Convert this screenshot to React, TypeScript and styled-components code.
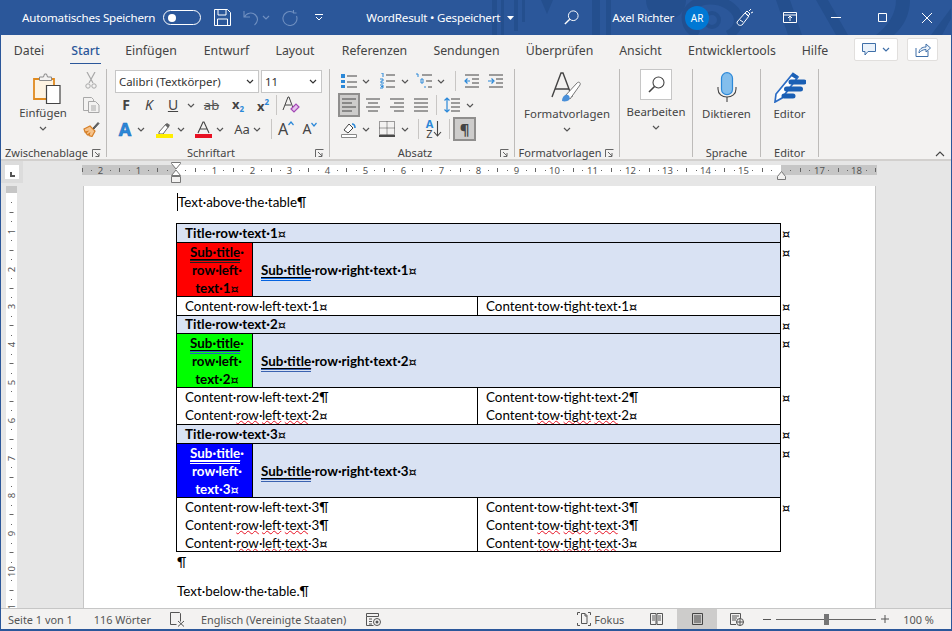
import React from "react";
import styled, { createGlobalStyle } from "styled-components";

const UI = `"Noto Sans", "Open Sans", sans-serif`;
const DOC = `Lato, "Noto Sans", sans-serif`;

const Global = createGlobalStyle`
  html, body { margin: 0; padding: 0; overflow: hidden; }
  body { font-family: ${UI}; }
`;

const Win = styled.div`
  width: 952px; height: 631px; box-sizing: border-box; display: flex; flex-direction: column;
  border-left: 1px solid #2b579a; border-right: 1px solid #2b579a; border-bottom: 2px solid #2b579a;
  background: #e6e6e6; overflow: hidden;
`;
const TitleBar = styled.div`
  position: relative; height: 35px; margin: 0 -1px; background: #2b579a; color: #fff; display: flex; align-items: center;
  flex: none; font-size: 11.6px; letter-spacing: -0.2px; overflow: hidden; white-space: nowrap;
`;
const Pattern = styled.svg`position: absolute; left: 476px; top: 0;`;
const TitleSlot = styled.div<{ $l: number }>`
  position: relative; margin-left: ${p => p.$l}px; display: flex; align-items: center; flex: none;
`;
const Toggle = styled.div`
  width: 38px; height: 15px; box-sizing: border-box; border: 1px solid #fff; border-radius: 8px; display: flex; align-items: center; padding-left: 4px;
`;
const Knob = styled.div`width: 8px; height: 8px; border-radius: 50%; background: #fff;`;
const Avatar = styled.div`
  width: 24px; height: 24px; border-radius: 50%; background: #0078d4; font-size: 10px; letter-spacing: 0; display: flex; align-items: center; justify-content: center;
`;

const Tabs = styled.div`
  height: 29px; flex: none; display: flex; align-items: flex-start; background: #f3f2f1; color: #444; font-size: 12.3px; white-space: nowrap;
`;
const Tab = styled.div<{ $w: number }>`
  width: ${p => p.$w}px; flex: none; display: flex; justify-content: center; padding-top: 7px;
`;
const TabLabel = styled.span<{ $active?: boolean }>`
  height: 21px; line-height: 17px; box-sizing: content-box; display: block;
  ${p => (p.$active ? `border-bottom: 2px solid #2b579a; color: #2b579a; font-weight: 500; padding: 0 1px;` : "")}
`;
const TabActions = styled.div`display: flex; gap: 9px; margin-left: 17px; padding-top: 3px;`;
const TabAction = styled.div<{ $w: number }>`
  width: ${p => p.$w}px; height: 23px; box-sizing: border-box; background: #fff; border: 1px solid #e1dfdd; border-radius: 2px;
  display: flex; align-items: center; justify-content: center; gap: 6px;
`;

const Ribbon = styled.div`
  height: 97px; flex: none; box-sizing: border-box; background: #f3f2f1; display: flex; padding-top: 5px; position: relative; color: #444; font-size: 11.4px; white-space: nowrap;
  border-bottom: 2px solid #d2d0ce;
`;
const Group = styled.div<{ $w: number }>`
  width: ${p => p.$w}px; flex: none; box-sizing: border-box; height: 88px; border-right: 1px solid #bdbbb9; display: flex; flex-direction: column;
`;
const GroupBody = styled.div<{ $col?: boolean }>`
  flex: 1; min-height: 0; display: flex; ${p => (p.$col ? "flex-direction: column; align-items: center;" : "")}
`;
const GroupFoot = styled.div`
  height: 15px; line-height: 14px; display: grid; grid-template-columns: 1fr 14px; text-align: center; font-size: 11px; color: #444; margin-bottom: -4px; flex: none;
`;
const GroupFootFull = styled(GroupFoot)`grid-template-columns: 1fr;`;
const Launcher = styled.div`display: flex; align-items: center;`;
const Stack = styled.div<{ $pl?: number }>`display: flex; flex-direction: column; padding-left: ${p => p.$pl ?? 0}px;`;
const Row = styled.div<{ $h: number }>`height: ${p => p.$h}px; display: flex; align-items: center;`;
const Tool = styled.div<{ $w: number; $ml?: number; $on?: boolean }>`
  width: ${p => p.$w}px; margin-left: ${p => p.$ml ?? 0}px; flex: none; height: 100%; display: flex; align-items: center; justify-content: center; box-sizing: border-box;
  ${p => (p.$on ? "background: #cdcccb; border: 2px solid #8f8e8d;" : "")}
`;
const Sep = styled.div<{ $ml: number }>`width: 1px; height: 20px; margin-left: ${p => p.$ml}px; background: #c8c6c4; flex: none;`;
const Combo = styled.div<{ $w: number; $ml?: number }>`
  width: ${p => p.$w}px; margin-left: ${p => p.$ml ?? 0}px; height: 23px; box-sizing: border-box; border: 1px solid #c6c6c6; background: #fff; display: flex; align-items: center; justify-content: space-between;
  padding: 0 4px 0 3px; font-size: 11.4px; color: #333;
`;
const Glyph = styled.span<{ $b?: boolean; $i?: boolean; $s?: number }>`
  font-size: ${p => p.$s ?? 13}px; font-weight: ${p => (p.$b ? 700 : 400)}; font-style: ${p => (p.$i ? "italic" : "normal")}; color: #444; line-height: 1; position: relative;
`;
const Sub = styled.span<{ $up?: boolean }>`font-size: 8px; color: #2b88d8; font-weight: 700; vertical-align: ${p => (p.$up ? "6px" : "-3px")};`;
const Strike = styled.span`text-decoration: line-through; font-size: 13px; color: #555;`;
const PasteCol = styled.div`width: 66px; margin-left: 9px; display: flex; flex-direction: column; align-items: center; padding-top: 3px; box-sizing: border-box;`;
const PasteArt = styled.div`margin-left: 7px;`;
const PasteLabel = styled.div`line-height: 17px; font-size: 11.4px; margin-bottom: 5px;`;
const MiniCol = styled.div`width: 30px; display: flex; flex-direction: column; align-items: center; gap: 8px; padding-top: 3px;`;
const BigIcon = styled.div<{ $h: number; $pt: number }>`height: ${p => p.$h}px; padding-top: ${p => p.$pt}px; display: flex; justify-content: center;`;
const BigLabel = styled.div<{ $mt?: number }>`line-height: 16px; margin-top: ${p => p.$mt ?? 0}px; font-size: 11.4px;`;
const BoxIcon = styled.div`width: 32px; height: 31px; box-sizing: border-box; background: #fff; border: 1px solid #c6c6c6; display: flex; align-items: center; justify-content: center;`;
const Collapse = styled.div`position: absolute; right: 6px; bottom: 2px;`;

const RulerRow = styled.div`
  height: 25px; flex: none; display: flex; align-items: flex-start; background: #e6e6e6; padding-top: 4px; box-sizing: border-box;
`;
const Corner = styled.div`
  width: 14px; height: 14px; margin-left: 4px; margin-right: 63px; background: #fff; outline: 4px solid #dcdcdc; flex: none; display: flex; align-items: flex-end; justify-content: center;
`;
const CornerMark = styled.div`width: 5px; height: 5px; border-left: 2px solid #555; border-bottom: 2px solid #555; margin-bottom: 2px; box-sizing: border-box;`;
const Main = styled.div`flex: 1; min-height: 0; display: flex; overflow: hidden;`;
const VRuler = styled.div`width: 82px; flex: none; padding-left: 5px; box-sizing: border-box; background: #e6e6e6;`;
const Page = styled.div`
  width: 793px; flex: none; box-sizing: border-box; background: #fff; border-left: 1px solid #c6c6c6; border-right: 1px solid #c6c6c6;
  padding: 7px 0 0 93px; font-family: ${DOC}; font-size: 13.4px; color: #000; line-height: 18px; overflow: hidden; white-space: nowrap;
`;
const Para = styled.div<{ $mb?: number }>`height: 18px; margin-bottom: ${p => p.$mb ?? 0}px;`;
const Caret = styled.span`display: inline-block; width: 1px; height: 18px; background: #000; vertical-align: top;`;
const Table = styled.table`
  border-collapse: collapse; table-layout: fixed; width: 625px; margin: 0 0 1px -1px; line-height: 18px;
`;
const Cell = styled.td<{ $bg?: string; $fg?: string; $center?: boolean; $b?: boolean; $lh?: number }>`
  border: 1px solid #000; padding: ${p => (p.$center ? "0 0 0 5px" : "0 8px")}; background: ${p => p.$bg ?? "#fff"}; color: ${p => p.$fg ?? "#000"};
  font-weight: ${p => (p.$b ? 700 : 400)}; text-align: ${p => (p.$center ? "center" : "left")}; vertical-align: middle; overflow: hidden;
  ${p => (p.$lh ? `line-height: ${p.$lh}px;` : "")}
`;
const Line = styled.div<{ $tight?: boolean }>`${p => (p.$tight ? "margin-bottom: -1px;" : "")}`;
const CurSign = styled.span`font-family: "DejaVu Sans", sans-serif; font-size: 13px; line-height: 1; font-weight: 400;`;
const Mark = styled.td`border: none; padding: 0 0 0 1px; vertical-align: top; line-height: 18px;`;
const Rw = styled.tr<{ $h: number }>`height: ${p => p.$h}px;`;
const Spell = styled.span`text-decoration: underline wavy #e81123 1px; text-underline-offset: 0; text-decoration-skip-ink: none;`;
const Gram = styled.span<{ $c: string; $u: string }>`
  text-decoration: underline ${p => p.$u} 1px; text-underline-offset: 2px; border-bottom: 3px double ${p => p.$c};
`;

const Status = styled.div`
  height: 20px; flex: none; box-sizing: content-box; border-top: 1px solid #c6c6c6; background: #f3f2f1; display: flex; align-items: center; font-size: 10.9px; color: #555; white-space: nowrap;
`;
const StatusItem = styled.div<{ $l: number; $w?: number; $on?: boolean }>`
  margin-left: ${p => p.$l}px; ${p => (p.$w ? `width: ${p.$w}px;` : "")} height: 100%; display: flex; align-items: center; justify-content: center; gap: 3px; flex: none;
  ${p => (p.$on ? "background: #cdcccb;" : "")}
`;
const SliderBox = styled(StatusItem)`gap: 0;`;
const SliderLine = styled.div<{ $w: number }>`width: ${p => p.$w}px; height: 1px; background: #666;`;
const SliderThumb = styled.div`width: 5px; height: 11px; background: #757575;`;

/* ---------- icons ---------- */
type IP = { w: number; h: number; children: React.ReactNode };
const I = ({ w, h, children }: IP) => (
  <svg width={w} height={h} viewBox={`0 0 ${w} ${h}`} fill="none" style={{ display: "block", flex: "none" }}>{children}</svg>
);
const Chev = ({ c = "#555" }: { c?: string }) => (
  <I w={8} h={5}><path d="M1 1l3 3 3-3" stroke={c} strokeWidth="1.2" /></I>
);
const ChevUp = () => <I w={10} h={6}><path d="M1 5l4-4 4 4" stroke="#444" strokeWidth="1.1" /></I>;
const LaunchIcon = () => (
  <I w={9} h={9}><path d="M.5 8V.5H8.5M3 3l4 4M7 4v3.5H3.5" stroke="#666" /></I>
);

const Paste = () => (
  <I w={28} h={32}>
    <path d="M1 7h20v20H1z" fill="#fdf3e2" stroke="#e08a1e" strokeWidth="1.8" />
    <path d="M6.500 8.500V5h4l1-3h2l1 3h4v3.500z" fill="#f3f2f1" stroke="#8a8a8a" />
    <path d="M13.500 13.500h13.500v18H13.500z" fill="#fff" stroke="#444" strokeWidth="1.2" />
  </I>
);
const Scissors = () => (
  <I w={12} h={17}>
    <path d="M2 0l6 11M10 0L4 11" stroke="#a8a8a8" strokeWidth="1.2" />
    <circle cx="3" cy="14" r="2.2" stroke="#a8a8a8" /><circle cx="9" cy="14" r="2.2" stroke="#a8a8a8" />
  </I>
);
const Copy = () => (
  <I w={17} h={16}>
    <path d="M.5.500h8l2 2v11H.5z" fill="#f3f2f1" stroke="#a8a8a8" />
    <path d="M5.500 4.500h7l3.500 3.500v7.500H5.500z" fill="#f3f2f1" stroke="#a8a8a8" />
    <path d="M8 9h5M8 11h5M8 13h5" stroke="#a8a8a8" />
  </I>
);
const Painter = () => (
  <I w={17} h={16}>
    <path d="M1 8l6-3 5 5-3 5.500-3-1 .5-2-2 1.500-1.500-2 1.500-1.500L2 11z" fill="#f6c38b" stroke="#d67f27" strokeWidth="1.2" />
    <path d="M10 7l5-5.500 1 1-5 5.500z" fill="#666" stroke="#444" strokeWidth=".8" />
  </I>
);
const ABlue = () => (
  <span><Glyph $b $s={18} style={{ color: "#2b88d8", WebkitTextStroke: "0.6px #1b6ec2" }}>A</Glyph></span>
);
const Eraser = () => (
  <I w={18} h={18}>
    <path d="M1 14L6 1h1l4 11M3 9h6" stroke="#444" />
    <path d="M9 13l5-5 3 3-5 5z" fill="#e7c3ee" stroke="#a349b5" strokeWidth="1.2" />
  </I>
);
const Hi = () => (
  <I w={17} h={17}>
    <path d="M3 11l7-8 3 2-6 8H3z" fill="#fff" stroke="#666" />
    <path d="M9 4l2-2 3 2-2 3z" fill="#666" />
    <rect y="13" width="17" height="4" fill="#ffee00" />
  </I>
);
const ARed = () => (
  <I w={17} h={17}>
    <path d="M3 12L8 1h1l5 11M5 8h7" stroke="#444" strokeWidth="1.1" />
    <rect y="13" width="17" height="4" fill="#e81123" />
  </I>
);
const Grow = ({ up }: { up: boolean }) => (
  <span style={{ display: "flex", alignItems: "flex-start" }}>
    <Glyph $s={up ? 16 : 14}>A</Glyph>
    <I w={6} h={5}><path d={up ? "M.5 4L3 1l2.500 3" : "M.5 1L3 4l2.500-3"} stroke="#2b88d8" strokeWidth="1.2" /></I>
  </span>
);
const Bullets = () => (
  <I w={16} h={15}>
    <path d="M0 0h4v4H0zM0 6h4v3H0zM0 11h4v3H0z" fill="#2b88d8" />
    <path d="M6 2h10M6 8h10M6 13h10" stroke="#444" />
  </I>
);
const Numbers = () => (
  <I w={15} h={16}>
    <path d="M1 0h2v4M0 6h3v2H1v2h3M0 12h3v3H0M1 13.500h2" stroke="#2b88d8" />
    <path d="M6 2h9M6 8h9M6 14h9" stroke="#444" />
  </I>
);
const Multi = () => (
  <I w={17} h={16}>
    <path d="M0 1h2v3M5 6h2v4h-2zM9 13v2" stroke="#2b88d8" />
    <path d="M6 2h10M10 8h6M12 14h4" stroke="#444" />
  </I>
);
const Indent = ({ right }: { right: boolean }) => (
  <I w={15} h={14}>
    <path d="M1 1h14M8 5h7M8 9h7M1 13h14" stroke="#444" />
    <path d={right ? "M0 7h5M3.500 4.500L6 7l-2.500 2.500" : "M6 7H1M3.500 4.500L1 7l2.500 2.500"} stroke="#2b88d8" strokeWidth="1.2" />
  </I>
);
const Align = ({ k }: { k: "l" | "c" | "r" | "j" }) => {
  const rows = { l: "M0 1h14M0 5h10M0 9h14M0 13h10", c: "M0 1h14M2 5h10M0 9h14M2 13h10", r: "M0 1h14M4 5h10M0 9h14M4 13h10", j: "M0 1h14M0 5h14M0 9h14M0 13h14" }[k];
  return <I w={14} h={14}><path d={rows} stroke="#444" /></I>;
};
const Spacing = () => (
  <I w={16} h={16}>
    <path d="M7 2h9M7 6h9M7 10h9M7 14h9" stroke="#444" />
    <path d="M3 1v14M.5 3.500L3 1l2.500 2.500M.5 12.500L3 15l2.500-2.500" stroke="#2b88d8" strokeWidth="1.2" />
  </I>
);
const Shade = () => (
  <I w={17} h={17}>
    <path d="M3 9l5-6 4 4-5 5z" fill="#fff" stroke="#444" />
    <path d="M11 3c2 0 3 2 3 4" stroke="#2b88d8" strokeWidth="1.6" />
    <path d="M.5 13.500h15v3H.5z" fill="#fff" stroke="#888" />
  </I>
);
const Borders = () => (
  <I w={16} h={16}>
    <path d="M.5.500h15v13H.5zM8 .5v13M.5 7h15" stroke="#444" strokeDasharray="1 1" />
    <path d="M0 15h16" stroke="#111" strokeWidth="1.5" />
  </I>
);
const Sort = () => (
  <span style={{ display: "flex", alignItems: "center" }}>
    <span style={{ display: "flex", flexDirection: "column", lineHeight: "10px", fontSize: 11, fontWeight: 700, alignItems: "center" }}>
      <span style={{ color: "#2b88d8" }}>A</span><span style={{ color: "#444", fontWeight: 400 }}>Z</span>
    </span>
    <I w={9} h={16}><path d="M4.500 0v15M1 11l3.500 4L8 11" stroke="#444" strokeWidth="1.1" /></I>
  </span>
);
const StyleIcon = () => (
  <I w={32} h={32}>
    <path d="M1 25L10 1h2l9 24M4.500 17h13" stroke="#444" strokeWidth="1.4" />
    <path d="M14 24l12-13c2-2 4 0 3 2L19 27z" fill="#fff" stroke="#777" />
    <path d="M11 29c0-4 3-7 6-6 2 1 2 3 1 5-1 1-4 2-7 1z" fill="#4a90d9" />
  </I>
);
const Lens = ({ s = 17, c = "#444" }: { s?: number; c?: string }) => (
  <svg width={s} height={s} viewBox="0 0 17 17" fill="none" style={{ display: "block" }}>
    <circle cx="10.500" cy="6.500" r="5.500" stroke={c} strokeWidth="1.1" />
    <path d="M6.500 10.500L1 16" stroke={c} strokeWidth="1.6" />
  </svg>
);
const Mic = () => (
  <I w={20} h={30}>
    <rect x="4.500" y=".7" width="11" height="22" rx="5.500" fill="#83beec" stroke="#2b88d8" strokeWidth="1.200" />
    <path d="M1 15v2c0 5 4 8 9 8s9-3 9-8v-2" stroke="#444" strokeWidth="1.1" />
    <path d="M10 25v5" stroke="#444" strokeWidth="1.1" />
  </I>
);
const Pen = () => (
  <I w={32} h={31}>
    <path d="M19 1.500L24 5 8 26l-7 4 1-8z" fill="#fff" stroke="#2b6cc4" strokeWidth="1.700" />
    <path d="M17 10h13M12.500 17h14M10 24h9" stroke="#1a5fb4" strokeWidth="5" strokeLinecap="round" />
    <path d="M19 1l5 3-2 3-5-3z" fill="#1a5fb4" />
  </I>
);
const Bubble = () => (
  <I w={14} h={13}><path d="M.5.500h13v8H6L3 12V8.500H.5z" fill="#eaf2fa" stroke="#3f6fa8" /></I>
);
const Share = () => (
  <I w={16} h={14}>
    <path d="M1 5v8.500h12V8" stroke="#3f6fa8" />
    <path d="M4 10c0-4 3-6 7-6V1l4.500 4-4.500 4V6.500C8 6.500 5.500 8 4 10z" fill="#eaf2fa" stroke="#3f6fa8" />
  </I>
);
const Save = () => (
  <I w={17} h={17}><path d="M.5.500h13l3 3v13H.5zM4 .5V6h8V.5M3.500 16.500V10h10v6.500" stroke="#fff" /></I>
);
const Undo = () => (
  <I w={16} h={16}><path d="M1 1v6h6M1.500 7C3 3 9 1.500 12.500 5c3 3 2.500 7-1 10" stroke="#6f8fc0" strokeWidth="1.1" /></I>
);
const Redo = () => (
  <I w={16} h={16}><path d="M11 2.200A7 7 0 1 0 14.500 6M11.500 0v3h3" stroke="#6f8fc0" strokeWidth="1.1" /></I>
);
const Qat = () => <I w={8} h={7}><path d="M0 .5h8M1 3l3 3 3-3" stroke="#fff" /></I>;
const Wand = () => (
  <I w={17} h={17}>
    <path d="M1 13l8-9 4 3-7 9c-2 1-5 0-5-3z" stroke="#fff" />
    <path d="M9 4l2-2 3 3-2 2zM13 2l2-2M15 4l2-1M4 11l3 2" stroke="#fff" />
  </I>
);
const Display = () => (
  <I w={14} h={11}><path d="M.5.500h13v10H.5zM.5 3h13M7 9V4.500M5 6l2-2 2 2" stroke="#fff" /></I>
);
const Min = () => <I w={10} h={1}><path d="M0 .5h10" stroke="#fff" /></I>;
const Max = () => <I w={9} h={9}><path d="M.5.500h8v8h-8z" stroke="#fff" /></I>;
const Close = () => <I w={10} h={10}><path d="M0 0l10 10M10 0L0 10" stroke="#fff" /></I>;
const Proof = () => (
  <I w={15} h={15}><path d="M.5.500h9l1 1v8M.5.500v12h6" stroke="#555" /><path d="M8 9l6 5.500M14 9l-6 5.500" stroke="#555" /></I>
);
const Macro = () => (
  <I w={15} h={13}>
    <path d="M.5.500h12v3H.5zM.5 3.500v9h7M3 6h3M3 8.500h3M3 11h3" stroke="#555" />
    <circle cx="11" cy="9" r="3.500" stroke="#555" /><circle cx="11" cy="9" r="1.500" fill="#555" />
  </I>
);
const Focus = () => (
  <I w={14} h={14}>
    <path d="M.5 3V.5H3M11 .5h2.500V3M.5 11v2.500H3M11 13.500h2.500V11" stroke="#555" />
    <path d="M4.500 1.500h3.500l2 2v8H4.500zM8 1.500V4h2" stroke="#555" />
  </I>
);
const Read = () => (
  <I w={13} h={12}><path d="M.5.500h5.500v11H.5zM7 .5h5.500v11H7zM2 3h3M2 5h3M2 7h3M8 3h3M8 5h3M8 7h3" stroke="#555" /></I>
);
const Layout = () => (
  <I w={11} h={12}><path d="M.5.500h10v11H.5zM2 3h7M2 5h7M2 7h7M2 9h7" stroke="#444" /></I>
);
const Web = () => (
  <I w={14} h={13}>
    <path d="M.5.500h10V6M.5.500v11H6M2 3h7M2 5h5M2 7h4" stroke="#555" />
    <circle cx="10" cy="9" r="3.500" fill="#f3f2f1" stroke="#555" /><path d="M6.500 9h7M10 5.500v7" stroke="#555" />
  </I>
);

/* ---------- rulers ---------- */
const CM = 37.8;
const HRuler = () => {
  const o = 94;
  const ticks: React.ReactNode[] = [];
  for (let q = -10; q <= 74; q++) {
    const n = q / 4;
    const x = Math.round(o + n * CM) + 0.5;
    if (q % 4 === 0) {
      if (n !== 0 && n !== 16) ticks.push(<text key={q} x={x} y={8.500} textAnchor="middle" fontSize="9.500" fill="#555" fontFamily="Noto Sans">{Math.abs(n)}</text>);
    } else if (q % 2 === 0) ticks.push(<path key={q} d={`M${x} 3v4`} stroke="#666" />);
    else ticks.push(<path key={q} d={`M${x} 5v1`} stroke="#666" />);
  }
  return (
    <svg width={795} height={24} viewBox="0 0 795 24" style={{ display: "block", flex: "none", marginTop: -3 }} fill="none">
      <g transform="translate(0 3)">
        <rect width="795" height="10" fill="#c6c6c6" />
        <rect x="94" width="605" height="10" fill="#fff" />
        {ticks}
      </g>
      <path d="M89.500 .5h9v1L94 7l-4.500-5.500z M89.500 13.500L94 8l4.500 5.500z" fill="#fff" stroke="#777" />
      <path d="M89.500 14.500h9v6h-9z" fill="#f3f2f1" stroke="#777" />
      <path d="M695.500 14.500L699.500 9.500l4 5v3h-8z" fill="#f3f2f1" stroke="#777" />
    </svg>
  );
};
const VRulerArt = () => {
  const o = 7;
  const t: React.ReactNode[] = [];
  for (let q = 1; q <= 46; q++) {
    const n = q / 4;
    const y = Math.round(o + n * CM) + 0.5;
    if (q % 4 === 0) t.push(<text key={q} x={5.500} y={y} transform={`rotate(-90 5.500 ${y})`} dy="3" textAnchor="middle" fontSize="9.500" fill="#555" fontFamily="Noto Sans">{n}</text>);
    else if (q % 2 === 0) t.push(<path key={q} d={`M3.500 ${y}h4`} stroke="#666" />);
    else t.push(<path key={q} d={`M5 ${y}h1`} stroke="#666" />);
  }
  return (
    <svg width={11} height={422} viewBox="0 0 11 422" style={{ display: "block" }} fill="none">
      <rect width="11" height="422" fill="#fff" />
      <rect width="11" height="7" fill="#c6c6c6" />
      {t}
    </svg>
  );
};

/* ---------- data ---------- */
const BLUE = "#d9e2f3";
const Cur = () => <CurSign>¤</CurSign>;
const Section = ({ n, bg, fg, u, d, lines }: { n: number; bg: string; fg: string; u: string; d: string; lines: number }) => {
  const left: React.ReactNode[] = [];
  const right: React.ReactNode[] = [];
  const tight = lines === 3;
  for (let i = 0; i < lines; i++) {
    const last = i === lines - 1;
    const e = last ? <Cur /> : "¶";
    if (i === 0) {
      left.push(<Line key={i} $tight={tight && last}>Content·row·left·text·{n}{e}</Line>);
      right.push(<Line key={i} $tight={tight && last}>Content·tow·tight·text·{n}{e}</Line>);
    } else {
      left.push(<Line key={i} $tight={tight && last}>Content·<Spell>row</Spell>·<Spell>left</Spell>·<Spell>text</Spell>·{n}{e}</Line>);
      right.push(<Line key={i} $tight={tight && last}>Content·<Spell>tow</Spell>·<Spell>tight</Spell>·<Spell>text</Spell>·{n}{e}</Line>);
    }
  }
  return (
    <>
      <Rw $h={n === 2 ? 18 : 19}>
        <Cell colSpan={3} $bg={BLUE} $b $lh={n === 2 ? 17 : 18}>Title·row·text·{n}<Cur /></Cell>
        <Mark><Cur /></Mark>
      </Rw>
      <Rw $h={54}>
        <Cell $bg={bg} $fg={fg} $b $center>
          <Line><Gram $c={d} $u={u}>Sub·title</Gram>·</Line>
          <Line>row·left·</Line>
          <Line $tight>text·{n}<Cur /></Line>
        </Cell>
        <Cell colSpan={2} $bg={BLUE} $b><Gram $c={n === 1 ? "#0563e0" : "#3a62b0"} $u="#000">Sub·title</Gram>·row·right·text·{n}<Cur /></Cell>
        <Mark><Cur /></Mark>
      </Rw>
      <Rw $h={lines === 3 ? 54 : lines * 18 + 1}>
        <Cell colSpan={2}>{left}</Cell>
        <Cell>{right}</Cell>
        <Mark><Cur /></Mark>
      </Rw>
    </>
  );
};

const tabs: [string, number][] = [["Datei", 56], ["Start", 57], ["Einfügen", 74], ["Entwurf", 77], ["Layout", 60], ["Referenzen", 99], ["Sendungen", 85], ["Überprüfen", 101], ["Ansicht", 61], ["Entwicklertools", 122], ["Hilfe", 44]];

export default function App() {
  return (
    <Win>
      <Global />
      <TitleBar>
        <Pattern width={476} height={35} viewBox="0 0 476 35" fill="none">
          <g fill="#244f8e">
            <rect x="16" y="0" width="5" height="35" /><rect x="25" y="0" width="3" height="35" /><rect x="38" y="0" width="4" height="31" /><rect x="46" y="0" width="3" height="22" />
            <path d="M65 0h12l-6 14zM116 0h8v35h-8zM130 0h5v35h-5z" />
            <path d="M170 0h40a20 20 0 0 1-40 0z" />
            <path d="M300 0h14l12 35h-14zM340 0h12l20 35h-12z" />
            <path d="M400 35C412 26 420 14 420 0h14c0 14-6 26-16 35zM455 35l21-28v10l-10 18z" />
          </g>
          <path d="M222 35c-8-4-12-10-12-18s10-17 24-17 26 8 28 17-4 15-10 18" stroke="#244f8e" strokeWidth="9" />
          <circle cx="236" cy="20" r="7" stroke="#244f8e" strokeWidth="4" />
        </Pattern>
        <TitleSlot $l={22}>Automatisches Speichern</TitleSlot>
        <TitleSlot $l={8}><Toggle><Knob /></Toggle></TitleSlot>
        <TitleSlot $l={13}><Save /></TitleSlot>
        <TitleSlot $l={12}><Undo /></TitleSlot>
        <TitleSlot $l={3}><Chev c="#6f8fc0" /></TitleSlot>
        <TitleSlot $l={12}><Redo /></TitleSlot>
        <TitleSlot $l={17}><Qat /></TitleSlot>
        <TitleSlot $l={43}>WordResult • Gespeichert</TitleSlot>
        <TitleSlot $l={7}><I w={7} h={4}><path d="M0 0h7L3.500 4z" fill="#fff" /></I></TitleSlot>
        <TitleSlot $l={50}><Lens s={15} c="#fff" /></TitleSlot>
        <TitleSlot $l={33}>Axel Richter</TitleSlot>
        <TitleSlot $l={11}><Avatar>AR</Avatar></TitleSlot>
        <TitleSlot $l={27}><Wand /></TitleSlot>
        <TitleSlot $l={30}><Display /></TitleSlot>
        <TitleSlot $l={34}><Min /></TitleSlot>
        <TitleSlot $l={37}><Max /></TitleSlot>
        <TitleSlot $l={35}><Close /></TitleSlot>
      </TitleBar>

      <Tabs>
        {tabs.map(([t, w]) => (
          <Tab key={t} $w={w}><TabLabel $active={t === "Start"}>{t}</TabLabel></Tab>
        ))}
        <TabActions>
          <TabAction $w={44}><Bubble /><Chev c="#3f6fa8" /></TabAction>
          <TabAction $w={31}><Share /></TabAction>
        </TabActions>
      </Tabs>

      <Ribbon>
        <Group $w={106}>
          <GroupBody>
            <PasteCol>
              <PasteArt><Paste /></PasteArt>
              <PasteLabel>Einfügen</PasteLabel>
              <Chev />
            </PasteCol>
            <MiniCol><Scissors /><Copy /><Painter /></MiniCol>
          </GroupBody>
          <GroupFoot>Zwischenablage<Launcher><LaunchIcon /></Launcher></GroupFoot>
        </Group>

        <Group $w={223}>
          <Stack $pl={8}>
            <Row $h={24}>
              <Combo $w={144}>Calibri (Textkörper)<Chev c="#333" /></Combo>
              <Combo $w={61} $ml={2}>11<Chev c="#333" /></Combo>
            </Row>
            <Row $h={24}>
              <Tool $w={22}><Glyph $b $s={14}>F</Glyph></Tool>
              <Tool $w={24}><Glyph $i $s={14}>K</Glyph></Tool>
              <Tool $w={24}><Glyph $s={14} style={{ textDecoration: "underline" }}>U</Glyph></Tool>
              <Tool $w={12}><Chev /></Tool>
              <Tool $w={29}><Strike>ab</Strike></Tool>
              <Tool $w={24}><Glyph $b>x<Sub>2</Sub></Glyph></Tool>
              <Tool $w={26}><Glyph $b>x<Sub $up>2</Sub></Glyph></Tool>
              <Sep $ml={0} />
              <Tool $w={28}><Eraser /></Tool>
            </Row>
            <Row $h={24}>
              <Tool $w={20}><ABlue /></Tool>
              <Tool $w={12}><Chev /></Tool>
              <Tool $w={22} $ml={6}><Hi /></Tool>
              <Tool $w={12}><Chev /></Tool>
              <Tool $w={22} $ml={5}><ARed /></Tool>
              <Tool $w={12}><Chev /></Tool>
              <Tool $w={22} $ml={5}><Glyph $s={13}>Aa</Glyph></Tool>
              <Tool $w={8}><Chev /></Tool>
              <Sep $ml={10} />
              <Tool $w={28}><Grow up /></Tool>
              <Tool $w={20}><Grow up={false} /></Tool>
            </Row>
          </Stack>
          <GroupBody />
          <GroupFoot>Schriftart<Launcher><LaunchIcon /></Launcher></GroupFoot>
        </Group>

        <Group $w={185}>
          <Stack $pl={8}>
            <Row $h={24}>
              <Tool $w={22}><Bullets /></Tool>
              <Tool $w={12}><Chev /></Tool>
              <Tool $w={22} $ml={4}><Numbers /></Tool>
              <Tool $w={12} $ml={1}><Chev /></Tool>
              <Tool $w={22} $ml={2}><Multi /></Tool>
              <Tool $w={12}><Chev /></Tool>
              <Sep $ml={8} />
              <Tool $w={15} $ml={8}><Indent right={false} /></Tool>
              <Tool $w={15} $ml={9}><Indent right /></Tool>
            </Row>
            <Row $h={24}>
              <Tool $w={22} $on><Align k="l" /></Tool>
              <Tool $w={24} $ml={1}><Align k="c" /></Tool>
              <Tool $w={24}><Align k="r" /></Tool>
              <Tool $w={24}><Align k="j" /></Tool>
              <Sep $ml={3} />
              <Tool $w={24} $ml={3}><Spacing /></Tool>
              <Tool $w={12}><Chev /></Tool>
            </Row>
            <Row $h={24}>
              <Tool $w={22}><Shade /></Tool>
              <Tool $w={12}><Chev /></Tool>
              <Tool $w={22} $ml={4}><Borders /></Tool>
              <Tool $w={12} $ml={1}><Chev /></Tool>
              <Sep $ml={7} />
              <Tool $w={24} $ml={3}><Sort /></Tool>
              <Sep $ml={3} />
              <Tool $w={23} $ml={3} $on><Glyph $b $s={15}>¶</Glyph></Tool>
            </Row>
          </Stack>
          <GroupBody />
          <GroupFoot>Absatz<Launcher><LaunchIcon /></Launcher></GroupFoot>
        </Group>

        <Group $w={105}>
          <GroupBody $col>
            <BigIcon $h={34} $pt={3}><StyleIcon /></BigIcon>
            <BigLabel>Formatvorlagen</BigLabel>
            <BigIcon $h={8} $pt={5}><Chev /></BigIcon>
          </GroupBody>
          <GroupFoot>Formatvorlagen<Launcher><LaunchIcon /></Launcher></GroupFoot>
        </Group>

        <Group $w={73}>
          <GroupBody $col>
            <BoxIcon><Lens /></BoxIcon>
            <BigLabel $mt={4}>Bearbeiten</BigLabel>
            <BigIcon $h={8} $pt={5}><Chev /></BigIcon>
          </GroupBody>
          <GroupFootFull />
        </Group>

        <Group $w={68}>
          <GroupBody $col>
            <BigIcon $h={34} $pt={3}><Mic /></BigIcon>
            <BigLabel>Diktieren</BigLabel>
          </GroupBody>
          <GroupFootFull>Sprache</GroupFootFull>
        </Group>

        <Group $w={58}>
          <GroupBody $col>
            <BigIcon $h={34} $pt={3}><Pen /></BigIcon>
            <BigLabel>Editor</BigLabel>
          </GroupBody>
          <GroupFootFull>Editor</GroupFootFull>
        </Group>
        <Collapse><ChevUp /></Collapse>
      </Ribbon>

      <RulerRow>
        <Corner><CornerMark /></Corner>
        <HRuler />
      </RulerRow>

      <Main>
        <VRuler><VRulerArt /></VRuler>
        <Page>
          <Para $mb={12}><Caret />Text·above·the·table¶</Para>
          <Table>
            <colgroup>
              <col style={{ width: 76 }} /><col style={{ width: 225 }} /><col style={{ width: 303 }} /><col />
            </colgroup>
            <tbody>
              <Section n={1} bg="#ff0000" fg="#000" u="#000" d="#222" lines={1} />
              <Section n={2} bg="#00ff00" fg="#000" u="#000" d="#2b5fc0" lines={2} />
              <Section n={3} bg="#0000ff" fg="#fff" u="#fff" d="#fff" lines={3} />
            </tbody>
          </Table>
          <Para $mb={11}>¶</Para>
          <Para>Text·below·the·table.¶</Para>
        </Page>
      </Main>

      <Status>
        <StatusItem $l={7}>Seite 1 von 1</StatusItem>
        <StatusItem $l={21}>116 Wörter</StatusItem>
        <StatusItem $l={19}><Proof /></StatusItem>
        <StatusItem $l={16}>Englisch (Vereinigte Staaten)</StatusItem>
        <StatusItem $l={20}><Macro /></StatusItem>
        <StatusItem $l={196}><Focus />Fokus</StatusItem>
        <StatusItem $l={26}><Read /></StatusItem>
        <StatusItem $l={14} $w={40} $on><Layout /></StatusItem>
        <StatusItem $l={13}><Web /></StatusItem>
        <StatusItem $l={19}><I w={8} h={1}><path d="M0 .5h8" stroke="#555" /></I></StatusItem>
        <SliderBox $l={5}><SliderLine $w={48} /><SliderThumb /><SliderLine $w={47} /></SliderBox>
        <StatusItem $l={5}><I w={8} h={8}><path d="M0 4h8M4 0v8" stroke="#555" /></I></StatusItem>
        <StatusItem $l={14}>100 %</StatusItem>
      </Status>
    </Win>
  );
}
